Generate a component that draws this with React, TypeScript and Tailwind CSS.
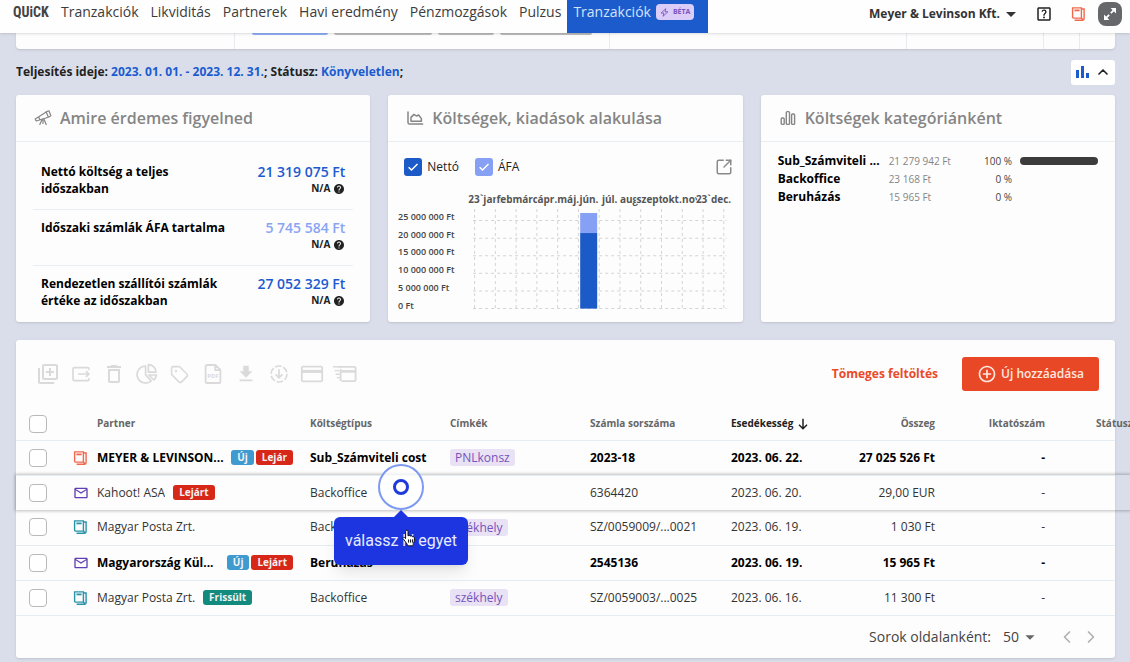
import { useState } from 'react';
import type { ReactNode } from 'react';
import clsx from 'clsx';
import { ChevronLeft, ChevronRight, ChevronUp, SquareArrowOutUpRight, Tag } from 'lucide-react';
import {
  MdAddCircleOutline,
  MdArrowDropDown,
  MdDeleteOutline,
  MdDownload,
  MdHelp,
  MdMailOutline,
  MdOutlineHelpCenter,
  MdOutlineLibraryAdd,
} from 'react-icons/md';

const navItems = ['Tranzakciók', 'Likviditás', 'Partnerek', 'Havi eredmény', 'Pénzmozgások', 'Pulzus'];

const highlights = [
  { label: 'Nettó költség a teljes időszakban', value: '21 319 075 Ft', color: 'text-[#1b5bd0]' },
  { label: 'Időszaki számlák ÁFA tartalma', value: '5 745 584 Ft', color: 'text-[#8aa4f4]' },
  { label: 'Rendezetlen szállítói számlák értéke az időszakban', value: '27 052 329 Ft', color: 'text-[#1b5bd0]' },
];

const categories = [
  { name: 'Sub_Számviteli ...', amount: '21 279 942 Ft', percent: 100 },
  { name: 'Backoffice', amount: '23 168 Ft', percent: 0 },
  { name: 'Beruházás', amount: '15 965 Ft', percent: 0 },
];

const months = ['23`jan.', 'feb.', 'márc.', 'ápr.', 'máj.', 'jún.', 'júl.', 'aug.', 'szept.', 'okt.', 'nov.', '23`dec.'];
const amounts = ['25 000 000 Ft', '20 000 000 Ft', '15 000 000 Ft', '10 000 000 Ft', '5 000 000 Ft', '0 Ft'];

type Badge = 'Új' | 'Lejár' | 'Lejárt' | 'Frissült';

type Row = {
  source: 'orange' | 'mail' | 'teal';
  partner: string;
  badges: Badge[];
  type: string;
  tag?: string;
  invoice: string;
  due: string;
  amount: string;
  unread?: boolean;
  active?: boolean;
};

const rows: Row[] = [
  { source: 'orange', partner: 'MEYER & LEVINSON...', badges: ['Új', 'Lejár'], type: 'Sub_Számviteli cost', tag: 'PNLkonsz', invoice: '2023-18', due: '2023. 06. 22.', amount: '27 025 526 Ft', unread: true },
  { source: 'mail', partner: 'Kahoot! ASA', badges: ['Lejárt'], type: 'Backoffice', invoice: '6364420', due: '2023. 06. 20.', amount: '29,00 EUR', active: true },
  { source: 'teal', partner: 'Magyar Posta Zrt.', badges: [], type: 'Backoffice', tag: 'székhely', invoice: 'SZ/0059009/...0021', due: '2023. 06. 19.', amount: '1 030 Ft' },
  { source: 'mail', partner: 'Magyarország Kül...', badges: ['Új', 'Lejárt'], type: 'Beruházás', invoice: '2545136', due: '2023. 06. 19.', amount: '15 965 Ft', unread: true },
  { source: 'teal', partner: 'Magyar Posta Zrt.', badges: ['Frissült'], type: 'Backoffice', tag: 'székhely', invoice: 'SZ/0059003/...0025', due: '2023. 06. 16.', amount: '11 300 Ft' },
];

const badgeColors: Record<Badge, string> = {
  Új: 'bg-[#3f9ad0]',
  Lejár: 'bg-[#d62718]',
  Lejárt: 'bg-[#d62718]',
  Frissült: 'bg-[#128a7d]',
};

const PagesIcon = ({ className }: { className?: string }) => (
  <svg viewBox="0 0 14 14" className={className} fill="none" stroke="currentColor" strokeWidth="1.4">
    <path d="M1.6.9h8.8v10.2H2.4a.8.8 0 0 1-.8-.8V.9z" />
    <path d="M3.4 3.4h5.2" strokeWidth="1.8" />
    <path d="M10.6 2h2.5v9.8a1.4 1.4 0 0 1-1.4 1.4H3.6M10.4 11l1.6 1.8" />
  </svg>
);

const TelescopeIcon = () => (
  <svg viewBox="0 0 18 16" className="h-4 w-[18px]" fill="none" stroke="currentColor" strokeWidth="1.2" strokeLinejoin="round" strokeLinecap="round">
    <path d="M1.2 8.9 12.2 2l2.2 5.2L2.2 11zM12 1.9l2.9-1.1 2 5-2.5 1.4M4.6 6.8l1.3 3" />
    <path d="m8.2 9.2-2.4 5.2M9.8 8.8l2.4 5.6M9 10v3.4" />
  </svg>
);

const AreaIcon = () => (
  <svg viewBox="0 0 18 16" className="h-4 w-[18px]" fill="none" stroke="currentColor" strokeWidth="1.5" strokeLinejoin="round" strokeLinecap="round">
    <path d="M2 2v10.5a1.6 1.6 0 0 0 1.6 1.6h13" />
    <path d="M5 11.2V7.4l3-3 2.4 1.6 2.2-1 2.8 3.6v2.6z" />
  </svg>
);

const BarsIcon = () => (
  <svg viewBox="0 0 18 16" className="h-4 w-[18px]" fill="none" stroke="currentColor" strokeWidth="1.4">
    <rect x="2.2" y="8" width="3" height="6.4" rx="1" />
    <rect x="7.3" y="1.6" width="3.2" height="12.8" rx="1" />
    <rect x="12.6" y="4" width="3" height="10.4" rx="1" />
  </svg>
);

const MoveIcon = () => (
  <svg viewBox="0 0 20 20" className="size-5" fill="none" stroke="currentColor" strokeWidth="1.7">
    <path d="M18 6V5a1.4 1.4 0 0 0-1.4-1.4H3.4A1.4 1.4 0 0 0 2 5v10.2a1.4 1.4 0 0 0 1.4 1.4h13.2a1.4 1.4 0 0 0 1.4-1.4V14M7 10h10.6M15 7.2l2.8 2.8-2.8 2.8" />
  </svg>
);

const PieIcon = () => (
  <svg viewBox="0 0 22 22" className="size-[22px]" fill="none" stroke="currentColor" strokeWidth="1.7" strokeLinejoin="round">
    <path d="M9.6 3.2a8.4 8.4 0 1 0 5.6 14.6L9.6 11.8z" />
    <path d="M12.4 1.6v7.6H20a7.6 7.6 0 0 0-7.6-7.6zM12.8 12h7.6a8.4 8.4 0 0 1-2.4 5z" />
  </svg>
);

const PdfIcon = () => (
  <svg viewBox="0 0 20 22" className="h-[22px] w-5" fill="none" stroke="currentColor" strokeWidth="1.8" strokeLinejoin="round">
    <path d="M12.4 2H4.2A1.6 1.6 0 0 0 2.6 3.6v14.8A1.6 1.6 0 0 0 4.2 20h11.6a1.6 1.6 0 0 0 1.6-1.6V7zM12.2 2v5.2h5.2" />
    <text x="10" y="15" textAnchor="middle" fontSize="6" fontWeight="700" stroke="none" fill="currentColor">PDF</text>
  </svg>
);

const DashedDownloadIcon = () => (
  <svg viewBox="0 0 20 20" className="size-5" fill="none" stroke="currentColor" strokeWidth="1.7">
    <circle cx="10" cy="10" r="8" strokeDasharray="6.4 1.98" />
    <path d="M10 5.2v8M6.6 10.4 10 13.8l3.4-3.4" />
  </svg>
);

const CardIcon = () => (
  <svg viewBox="0 0 24 18" className="h-[18px] w-6" fill="none" stroke="currentColor" strokeWidth="1.8">
    <rect x="1.8" y="1.6" width="20.4" height="14.8" rx="1.4" />
    <path d="M2 6.4h20" strokeWidth="3" />
  </svg>
);

const FastCardIcon = () => (
  <svg viewBox="0 0 24 18" className="h-[18px] w-6" fill="none" stroke="currentColor" strokeWidth="1.8">
    <path d="M5 1.8h16.4a1.2 1.2 0 0 1 1.2 1.2v12a1.2 1.2 0 0 1-1.2 1.2H8.6M7.6 4v12" />
    <path d="M8 6.4h14" strokeWidth="2.6" />
    <path d="M0 1.8h6M1.6 5.6h4.6M2.6 9.2h4M3.8 12.6h3" strokeWidth="1.4" />
  </svg>
);

const ExpandIcon = () => (
  <svg viewBox="0 0 14 14" className="size-[14px]" fill="currentColor">
    <path d="M7.6 1H13v5.4zM1 7.6V13h5.4z" />
    <path d="m10.6 3.4-2.8 2.8M6.2 7.8l-2.8 2.8" stroke="currentColor" strokeWidth="1.8" />
  </svg>
);

const HandCursor = () => (
  <svg viewBox="0 0 14 18" className="h-[18px] w-[14px]" fill="#fff" stroke="#111" strokeWidth="1" strokeLinejoin="round">
    <path d="M3.6 9.6V2.4a1.2 1.2 0 0 1 2.4 0v4.4l1.2-.4 1 .6 1.3-.1.9.7 1.2.1.8 1v3.5l-1.2 2.4v2.2H5.2v-1.6L2.8 12 .9 9.4c-.3-1 .9-1.5 1.6-.9z" />
    <path d="M6.6 10.4v3.2M8.6 10.4v3.2M10.6 10.4v3.2" />
  </svg>
);

const tools = [
  { label: 'Másolat', icon: <MdOutlineLibraryAdd size={24} /> },
  { label: 'Áthelyezés', icon: <MoveIcon /> },
  { label: 'Törlés', icon: <MdDeleteOutline size={24} /> },
  { label: 'Felosztás', icon: <PieIcon /> },
  { label: 'Címkézés', icon: <Tag size={19} strokeWidth={2} /> },
  { label: 'PDF', icon: <PdfIcon /> },
  { label: 'Letöltés', icon: <MdDownload size={22} /> },
  { label: 'Export', icon: <DashedDownloadIcon /> },
  { label: 'Fizetés', icon: <CardIcon /> },
  { label: 'Gyors fizetés', icon: <FastCardIcon /> },
];

const Card = ({ title, icon, children }: { title: string; icon: ReactNode; children: ReactNode }) => (
  <section className="h-[227px] min-w-0 rounded-[3px] bg-[#fdfdfd] shadow-sm">
    <h2 className="flex h-[47px] items-center gap-2 border-b border-[#e9eef3] px-[18px] text-base font-semibold text-[#858585]">
      {icon}
      {title}
    </h2>
    {children}
  </section>
);

const Series = ({ label, color }: { label: string; color: string }) => {
  const [checked, setChecked] = useState(true);
  return (
    <label className="flex items-center gap-[5px] text-xs text-[#222]">
      <span className="grid place-items-center">
        <input
          type="checkbox"
          checked={checked}
          onChange={() => setChecked(!checked)}
          className={clsx('col-start-1 row-start-1 size-[18px] appearance-none rounded-[3px]', color)}
        />
        {checked && (
          <svg viewBox="0 0 12 12" className="pointer-events-none col-start-1 row-start-1 size-3" fill="none" stroke="#fff" strokeWidth="1.5">
            <path d="m1.6 6.2 2.9 2.8 6-6" />
          </svg>
        )}
      </span>
      {label}
    </label>
  );
};

const CostChart = () => (
  <svg viewBox="0 0 334 125" className="w-full" role="img" aria-label="Költségek havonta">
    <g stroke="#d4d4d4" strokeDasharray="3 3">
      {months.concat('').map((_, i) => (
        <path key={i} d={`M${76.5 + i * 20.75} 19v100`} />
      ))}
      {amounts.map((_, i) => (
        <path key={i} d={`M75 ${30.5 + i * 17.6}h253`} />
      ))}
    </g>
    <rect x="182" y="23" width="17" height="20" fill="#86a0f3" />
    <rect x="182" y="43" width="17" height="75.5" fill="#1c5ac8" />
    <g fontSize="9" fontWeight="600" fill="#444">
      {amounts.map((amount, i) => (
        <text key={amount} x="0" y={30 + i * 17.7}>{amount}</text>
      ))}
    </g>
    <g fontSize="10" fontWeight="700" fill="#555" textAnchor="middle" stroke="#fdfdfd" strokeWidth="2" paintOrder="stroke">
      {months.map((month, i) => (
        <text key={month} x={87 + i * 20.75} y="13">{month}</text>
      ))}
    </g>
  </svg>
);

const Header = () => (
  <header className="relative z-10 flex h-[33px] bg-[#fefefe] shadow-sm">
    <a href="#" className="ml-[13px] flex h-6 w-[42px] items-center font-['Roboto_Condensed','Liberation_Sans_Narrow','Liberation_Sans',sans-serif] text-sm font-bold text-[#444]">
      QUiCK
    </a>
    <nav className="flex text-sm text-[#3c3c3c]">
      {navItems.map((item) => (
        <a key={item} href="#" className="flex h-6 items-center px-[6px] whitespace-nowrap">{item}</a>
      ))}
      <a href="#" className="flex h-[33px] items-center gap-[5px] bg-[#1b5bcb] pr-[14px] pb-[9px] pl-[6px] text-[#d5e3fa]">
        Tranzakciók
        <span className="flex h-4 items-center gap-1 rounded bg-[#dccdf8] px-1 text-[7px] font-bold text-[#7a55c0]">
          <svg viewBox="0 0 10 10" className="size-[9px]" fill="none" stroke="currentColor" strokeLinejoin="round">
            <path d="M6.4.8 1.2 5.6h3L3.4 9.2l5.4-5H5.6z" />
          </svg>
          BÉTA
        </span>
      </a>
    </nav>
    <div className="mr-2 ml-auto flex h-[27px] items-center">
      <label className="flex items-center text-xs font-bold text-[#333]">
        <span className="sr-only">Cég</span>
        <select className="h-5 appearance-none leading-5" defaultValue="meyer">
          <option value="meyer">Meyer &amp; Levinson Kft.</option>
        </select>
        <MdArrowDropDown size={24} className="pointer-events-none -ml-px" />
      </label>
      <button aria-label="Súgó" className="ml-3 text-[#222]"><MdOutlineHelpCenter size={18} /></button>
      <button aria-label="Dokumentumok" className="ml-[18px] text-[#f0694e]"><PagesIcon className="size-[14px]" /></button>
      <button aria-label="Teljes képernyő" className="ml-[13px] grid size-6 place-items-center rounded-lg bg-[#66676b] text-white">
        <ExpandIcon />
      </button>
    </div>
  </header>
);

const CoachMark = () => (
  <div className="pointer-events-none absolute top-[124px] left-[318px] z-10 flex w-[134px] flex-col items-center">
    <span className="grid size-[46px] place-items-center rounded-full border-2 border-[#7d9af0] bg-white/70">
      <span className="size-4 rounded-full border-[3px] border-[#1f3bdc]" />
    </span>
    <span className="size-0 border-x-[7px] border-b-[7px] border-x-transparent border-b-[#1c35e0]" />
    <div className="relative flex h-12 w-full items-center justify-center rounded-md bg-[#1c35e0] font-['Roboto',sans-serif] text-base whitespace-nowrap text-[#e6eaff] shadow-lg">
      válassz ki egyet
      <span className="absolute top-3 left-[68px]"><HandCursor /></span>
    </div>
  </div>
);

const checkboxClass = 'block size-[18px] appearance-none rounded-[4px] border border-[#b9b9b9] bg-white checked:bg-[#1b5bcb]';

const InvoiceTable = () => (
  <table className="w-[calc(100%+15px)] table-fixed text-left text-xs text-[#333]">
    <colgroup>
      <col className="w-[57px]" />
      <col className="w-[24px]" />
      <col className="w-[213px]" />
      <col className="w-[140px]" />
      <col className="w-[140px]" />
      <col className="w-[141px]" />
      <col className="w-[115px]" />
      <col className="w-[89px]" />
      <col className="w-[110px]" />
      <col />
      <col className="w-[15px]" />
    </colgroup>
    <thead className="text-[10px] text-[#666]">
      <tr className="h-8 whitespace-nowrap *:border-b *:border-[#e6edf2] *:p-0 *:font-bold">
        <th className="pl-[13px]!"><input type="checkbox" aria-label="Összes kijelölése" className={checkboxClass} /></th>
        <td></td>
        <th>Partner</th>
        <th>Költségtípus</th>
        <th>Címkék</th>
        <th>Számla sorszáma</th>
        <th className="text-[#222]">
          <button className="flex items-center gap-[5px] font-bold">
            Esedékesség
            <svg viewBox="0 0 10 12" className="h-3 w-[10px]" fill="none" stroke="currentColor" strokeWidth="1.5">
              <path d="M5 .8v10M1 6.8l4 4 4-4" />
            </svg>
          </button>
        </th>
        <th className="text-right">Összeg</th>
        <th className="text-right">Iktatószám</th>
        <th className="pl-[51px]!">Státusz</th>
        <td className="border-transparent!"></td>
      </tr>
    </thead>
    <tbody>
      {rows.map((row) => (
        <tr
          key={row.invoice}
          className={clsx(
            'h-[35px] whitespace-nowrap *:p-0',
            row.unread && 'font-bold text-black',
            row.active ? 'shadow-[0_0_3px_1px_rgba(0,0,0,0.25)]' : '*:border-b *:border-[#e6edf2] *:last:border-transparent',
          )}
        >
          <td className="pl-[13px]!"><input type="checkbox" aria-label={`${row.partner} kijelölése`} className={checkboxClass} /></td>
          <td>
            {row.source === 'mail' ? (
              <MdMailOutline size={16} className="text-[#5f3fb5]" />
            ) : (
              <PagesIcon className={clsx('size-[14px]', row.source === 'orange' ? 'text-[#f0694e]' : 'text-[#2b93a8]')} />
            )}
          </td>
          <td>
            <div className="flex items-center pr-[17px]">
              <span className="truncate">{row.partner}</span>
              <span className={clsx('flex gap-[2px] text-[10px] font-bold text-[#f2f2f2]', row.badges.length > 1 ? 'ml-auto pl-1' : 'pl-2')}>
                {row.badges.map((badge) => (
                  <span key={badge} className={clsx('h-[15px] rounded-[3px] px-[6px] leading-[14px]', badgeColors[badge])}>{badge}</span>
                ))}
              </span>
            </div>
          </td>
          <td>{row.type}</td>
          <td>
            {row.tag && <span className="inline-block h-[17px] rounded-[3px] bg-[#e9e2f4] px-[5px] leading-[17px] font-normal text-[#7653bd]">{row.tag}</span>}
          </td>
          <td>{row.invoice}</td>
          <td>{row.due}</td>
          <td className="text-right">{row.amount}</td>
          <td className="text-right">-</td>
          <td></td>
          <td></td>
        </tr>
      ))}
    </tbody>
  </table>
);

const App = () => (
  <div className="min-h-screen overflow-hidden bg-[#dadeea] font-['Open_Sans',sans-serif] text-[#222]">
    <Header />
    <main className="pr-[15px] pb-1 pl-4">
      {/* Bottom edge of the filter bar */}
      <div className="flex h-4 rounded-b bg-[#fdfdfd] shadow-sm *:border-r *:border-[#e8eaef]">
        <div className="w-[219px]" />
        <div className="flex w-[375px] gap-[6px] pl-[17px] *:h-[2px] *:rounded-b">
          <span className="w-[76px] bg-[#8fb0f5]" />
          <span className="w-[98px] bg-[#bdbdbd]" />
          <span className="w-[56px] bg-[#bdbdbd]" />
          <span className="w-[92px] bg-[#bdbdbd]" />
        </div>
        <div className="flex-1" />
        <div className="w-[137px]" />
        <div className="w-9" />
        <div className="w-[35px] border-transparent!" />
      </div>

      <div className="flex h-[46px] items-center justify-between text-xs font-bold">
        <p>
          Teljesítés ideje: <span className="text-[#1b5bd0]">2023. 01. 01. - 2023. 12. 31.</span>; Státusz:{' '}
          <span className="text-[#1b5bd0]">Könyveletlen</span>;
        </p>
        <button aria-label="Grafikonok elrejtése" className="flex h-[25px] w-11 items-center justify-center gap-[6px] rounded-[3px] bg-white">
          <svg viewBox="0 0 14 14" className="size-[14px]" fill="#1b5bcb">
            <path d="M1 5h3v8H1zM6 1h3v12H6zM11 8h3v5h-3z" />
          </svg>
          <ChevronUp size={16} strokeWidth={2.5} />
        </button>
      </div>

      <div className="grid grid-cols-3 gap-[18px]">
        <Card title="Amire érdemes figyelned" icon={<TelescopeIcon />}>
          <ul className="mx-[17px] pt-3">
            {highlights.map((item) => (
              <li key={item.label} className="flex h-14 justify-between border-b border-[#e9eef3] px-2 pt-[9px] leading-[17px] font-bold last:border-b-0">
                <span className="max-w-[184px] text-xs leading-[17px] text-black">{item.label}</span>
                <span className="text-right">
                  <span className={clsx('block text-sm leading-[17px] font-semibold', item.color)}>{item.value}</span>
                  <span className="flex items-center justify-end gap-[3px] text-[10px]">
                    N/A <MdHelp size={12} />
                  </span>
                </span>
              </li>
            ))}
          </ul>
        </Card>

        <Card title="Költségek, kiadások alakulása" icon={<AreaIcon />}>
          <div className="px-[10px] pt-4">
            <div className="flex items-center gap-4 pl-[6px]">
              <Series label="Nettó" color="bg-[#1c5ac8]" />
              <Series label="ÁFA" color="bg-[#86a0f3]" />
              <button aria-label="Megnyitás" className="ml-auto text-[#8a8a8a]"><SquareArrowOutUpRight size={18} /></button>
            </div>
            <div className="pt-[14px]"><CostChart /></div>
          </div>
        </Card>

        <Card title="Költségek kategóriánként" icon={<BarsIcon />}>
          <ul className="px-[17px] pt-[10px] leading-[18px]">
            {categories.map((category) => (
              <li key={category.name} className="flex items-center">
                <span className="w-[103px] text-xs leading-[18px] font-bold whitespace-nowrap text-black">{category.name}</span>
                <span className="ml-2 w-[72px] text-[10px] whitespace-nowrap text-[#858585]">{category.amount}</span>
                <span className="flex-1 text-right text-[10px] text-[#444]">{category.percent} %</span>
                <span className="ml-2 w-[78px]">
                  <span className="block h-2 rounded-full bg-[#3c3c3c]" style={{ width: `${category.percent}%` }} />
                </span>
              </li>
            ))}
          </ul>
        </Card>
      </div>

      <section className="relative mt-[18px] rounded-[3px] bg-[#fdfdfd] shadow-sm">
        <div className="flex h-[68px] items-center pr-4 pl-[15px]">
          <div className="flex text-[#dadada]">
            {tools.map((tool) => (
              <button key={tool.label} aria-label={tool.label} className="grid h-8 w-[33px] place-items-center">{tool.icon}</button>
            ))}
          </div>
          <a href="#" className="mr-6 ml-auto text-xs font-bold text-[#e94a27]">Tömeges feltöltés</a>
          <button className="flex h-[34px] w-[137px] items-center justify-center gap-1 rounded-[3px] bg-[#e94826] text-xs font-semibold text-[#ffe8e0]">
            <MdAddCircleOutline size={20} />
            Új hozzáadása
          </button>
        </div>

        <InvoiceTable />

        <div className="flex h-[42px] items-center justify-end pr-[14px] text-sm text-[#444]">
          <label className="flex items-center">
            Sorok oldalanként:
            <select className="ml-3 appearance-none" defaultValue="50">
              <option>50</option>
            </select>
            <MdArrowDropDown size={22} className="pointer-events-none -ml-px text-[#666]" />
          </label>
          <button aria-label="Előző oldal" className="ml-4 text-[#b0b0b0]"><ChevronLeft size={20} /></button>
          <button aria-label="Következő oldal" className="ml-1 text-[#b0b0b0]"><ChevronRight size={20} /></button>
        </div>

        <CoachMark />
      </section>
    </main>
  </div>
);

export default App;
